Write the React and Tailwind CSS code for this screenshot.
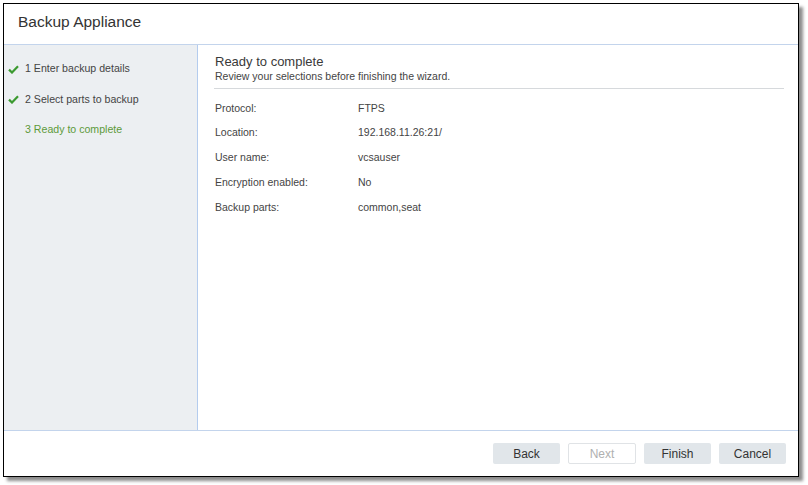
import React from 'react';

const steps = [
  { label: '1 Enter backup details', done: true },
  { label: '2 Select parts to backup', done: true },
  { label: '3 Ready to complete', done: false },
];

const rows = [
  ['Protocol:', 'FTPS'],
  ['Location:', '192.168.11.26:21/'],
  ['User name:', 'vcsauser'],
  ['Encryption enabled:', 'No'],
  ['Backup parts:', 'common,seat'],
];

const Check = () => (
  <svg width="11" height="9" viewBox="0 0 11 9" className="shrink-0">
    <path d="M1 4.6 L4 7.5 L10 1.3" fill="none" stroke="#3b9a30" strokeWidth="2.2" />
  </svg>
);

const App = () => {
  return (
    <div
      className="w-[808px] h-[485px] bg-white pt-[3px] pl-[3px]"
      style={{ fontFamily: '"Liberation Sans", Arial, sans-serif' }}
    >
      <div className="w-[796px] h-[474px] border border-black bg-white flex flex-col shadow-[4px_4px_3px_rgba(0,0,0,0.45)]">
        <div className="h-[41px] shrink-0 border-b border-[#c3d4ec] flex items-center pl-[14px] pb-[4px]">
          <span className="text-[15.5px] text-[#333]">Backup Appliance</span>
        </div>

        <div className="h-[386px] shrink-0 flex border-b border-[#c3d4ec]">
          <div className="w-[194px] shrink-0 bg-[#eceff2] border-r border-[#b4ccee] pt-[9px]">
            {steps.map((s) => (
              <div key={s.label} className="h-[30.5px] flex items-center pl-[4px]">
                <div className="w-[17px] flex items-center">{s.done && <Check />}</div>
                <span className={`text-[10.6px] ${s.done ? 'text-[#444]' : 'text-[#5d9a3a]'}`}>
                  {s.label}
                </span>
              </div>
            ))}
          </div>

          <div className="flex-1 pl-[17px] pr-[14px] pt-[9px]">
            <div className="text-[13px] text-[#3a3a3a] leading-[16px]">Ready to complete</div>
            <div className="text-[10.5px] text-[#444] leading-[13px]">
              Review your selections before finishing the wizard.
            </div>
            <div className="h-px bg-[#d6d9dc] mt-[5px] -ml-[1px]" />
            <div className="pt-[7px]">
              {rows.map(([k, v]) => (
                <div key={k} className="h-[24.75px] flex items-center text-[10.5px] text-[#444]">
                  <span className="w-[143px]">{k}</span>
                  <span>{v}</span>
                </div>
              ))}
            </div>
          </div>
        </div>

        <div className="flex-1 flex items-center justify-end gap-[8px] pr-[12px]">
          <button className="w-[67px] h-[21px] rounded-[2px] bg-[#e1e6ea] text-[12px] text-[#333]">Back</button>
          <button className="w-[68px] h-[21px] rounded-[2px] bg-white border border-[#e0e3e6] text-[12px] text-[#b0b0b0]">Next</button>
          <button className="w-[67px] h-[21px] rounded-[2px] bg-[#e1e6ea] text-[12px] text-[#333]">Finish</button>
          <button className="w-[67px] h-[21px] rounded-[2px] bg-[#e1e6ea] text-[12px] text-[#333]">Cancel</button>
        </div>
      </div>
    </div>
  );
};

export default App;
